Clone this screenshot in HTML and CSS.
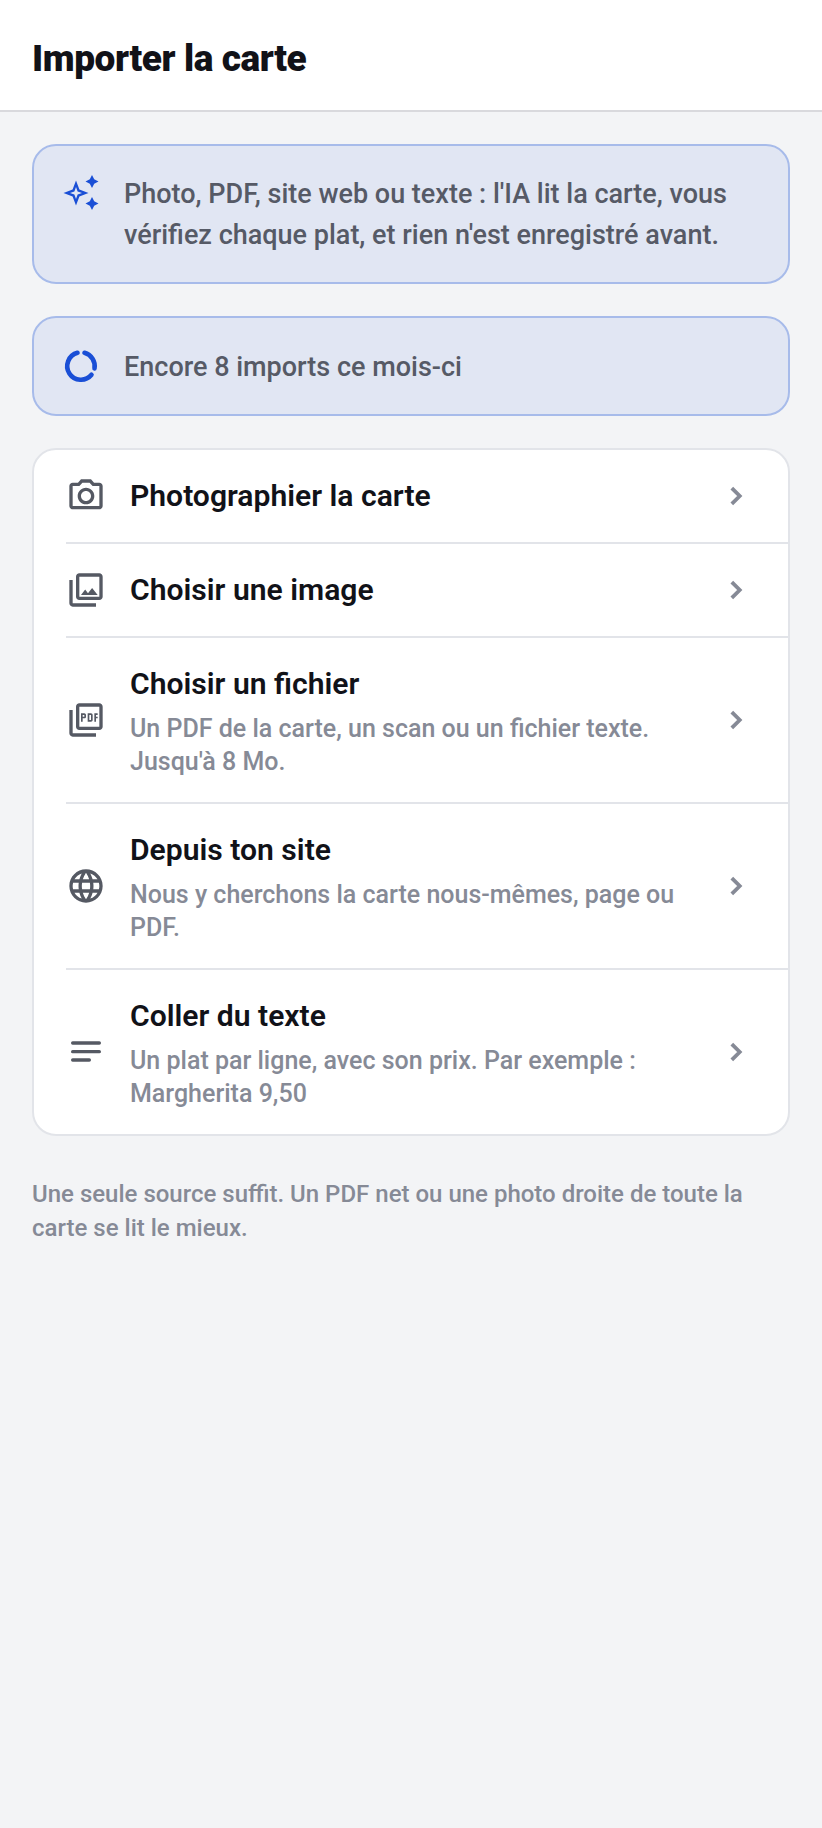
FILE: index.html
```html
<!DOCTYPE html>
<html lang="fr">
<head>
<meta charset="utf-8">
<title>Importer la carte</title>
<link rel="stylesheet" href="styles.css">
</head>
<body>
<header class="header"><h1 class="title">Importer la carte</h1></header>
<main class="content">
  <section class="banner">
    <svg class="banner-icon" viewBox="0 0 36 36"><path fill-rule="evenodd" d="M13 5.5 16.4 14.6 25.5 18 16.4 21.4 13 30.5 9.6 21.4 .5 18 9.6 14.6ZM13 12 11.4 16.4 7 18 11.4 19.6 13 24 14.6 19.6 19 18 14.6 16.4Z"/><path d="M29 0 31.2 4.3 35.5 6.5 31.2 8.7 29 13 26.8 8.7 22.5 6.5 26.8 4.3ZM29 22 31.2 26.3 35.5 28.5 31.2 30.7 29 35 26.8 30.7 22.5 28.5 26.8 26.3Z"/></svg>
    <p class="banner-text">Photo, PDF, site web ou texte : l'IA lit la carte, vous vérifiez chaque plat, et rien n'est enregistré avant.</p>
  </section>
  <section class="banner banner-center">
    <svg class="banner-icon" viewBox="0 0 36 36"><g class="ring"><path d="M21.5 4.8A13.7 13.7 0 0 1 31.5 20.4"/><path d="M28.5 26.8A13.7 13.7 0 1 1 14.5 4.8"/></g></svg>
    <p class="banner-text">Encore 8 imports ce mois-ci</p>
  </section>
  <section class="list">
    <div class="row">
      <svg class="row-icon" viewBox="0 0 24 24"><path d="M20 4h-3.17L15 2H9L7.17 4H4c-1.1 0-2 .9-2 2v12c0 1.1.9 2 2 2h16c1.1 0 2-.9 2-2V6c0-1.1-.9-2-2-2zm0 14H4V6h4.05l1.83-2h4.24l1.83 2H20v12zM12 7c-2.76 0-5 2.24-5 5s2.24 5 5 5 5-2.24 5-5-2.24-5-5-5zm0 8c-1.65 0-3-1.35-3-3s1.35-3 3-3 3 1.35 3 3-1.35 3-3 3z"/></svg>
      <div class="row-body"><div class="row-title">Photographier la carte</div></div>
      <svg class="chevron" viewBox="0 0 24 24"><path d="M9.2 6.7 14.5 12 9.2 17.3"/></svg>
    </div>
    <div class="row">
      <svg class="row-icon" viewBox="0 0 24 24"><path d="M20 4v12H8V4h12m0-2H8c-1.1 0-2 .9-2 2v12c0 1.1.9 2 2 2h12c1.1 0 2-.9 2-2V4c0-1.1-.9-2-2-2zm-8.5 9.67l1.69 2.26 2.48-3.1L19 15H9zM2 6v14c0 1.1.9 2 2 2h14v-2H4V6H2z"/></svg>
      <div class="row-body"><div class="row-title">Choisir une image</div></div>
      <svg class="chevron" viewBox="0 0 24 24"><path d="M9.2 6.7 14.5 12 9.2 17.3"/></svg>
    </div>
    <div class="row">
      <svg class="row-icon" viewBox="0 0 24 24"><path d="M20 2H8c-1.1 0-2 .9-2 2v12c0 1.1.9 2 2 2h12c1.1 0 2-.9 2-2V4c0-1.1-.9-2-2-2zm0 14H8V4h12v12zM4 6H2v14c0 1.1.9 2 2 2h14v-2H4V6zm12 6V9c0-.55-.45-1-1-1h-2v5h2c.55 0 1-.45 1-1zm-2-3h1v3h-1V9zm4 2h1v-1h-1V9h1V8h-2v5h1v-2zm-8 0h1c.55 0 1-.45 1-1V9c0-.55-.45-1-1-1H9v5h1v-2zm0-2h1v1h-1V9z"/></svg>
      <div class="row-body"><div class="row-title">Choisir un fichier</div><div class="row-sub">Un PDF de la carte, un scan ou un fichier texte. Jusqu'à 8 Mo.</div></div>
      <svg class="chevron" viewBox="0 0 24 24"><path d="M9.2 6.7 14.5 12 9.2 17.3"/></svg>
    </div>
    <div class="row">
      <svg class="row-icon" viewBox="0 0 24 24"><path d="M11.99 2C6.47 2 2 6.48 2 12s4.47 10 9.99 10C17.52 22 22 17.52 22 12S17.52 2 11.99 2zm6.93 6h-2.95c-.32-1.25-.78-2.45-1.38-3.56 1.84.63 3.37 1.91 4.33 3.56zM12 4.04c.83 1.2 1.48 2.53 1.91 3.96h-3.82c.43-1.43 1.08-2.76 1.91-3.96zM4.26 14C4.1 13.36 4 12.69 4 12s.1-1.36.26-2h3.38c-.08.66-.14 1.32-.14 2 0 .68.06 1.34.14 2H4.26zm.82 2h2.95c.32 1.25.78 2.45 1.38 3.56-1.84-.63-3.37-1.9-4.33-3.56zm2.95-8H5.08c.96-1.66 2.49-2.93 4.33-3.56C8.81 5.55 8.35 6.75 8.03 8zM12 19.96c-.83-1.2-1.48-2.53-1.91-3.96h3.82c-.43 1.43-1.08 2.76-1.91 3.96zM14.34 14H9.66c-.09-.66-.16-1.32-.16-2 0-.68.07-1.35.16-2h4.68c.09.65.16 1.32.16 2 0 .68-.07 1.34-.16 2zm.25 5.56c.6-1.11 1.06-2.31 1.38-3.56h2.95c-.96 1.65-2.49 2.93-4.33 3.56zM16.36 14c.08-.66.14-1.32.14-2 0-.68-.06-1.34-.14-2h3.38c.16.64.26 1.31.26 2s-.1 1.36-.26 2h-3.38z"/></svg>
      <div class="row-body"><div class="row-title">Depuis ton site</div><div class="row-sub">Nous y cherchons la carte nous-mêmes, page ou PDF.</div></div>
      <svg class="chevron" viewBox="0 0 24 24"><path d="M9.2 6.7 14.5 12 9.2 17.3"/></svg>
    </div>
    <div class="row">
      <svg class="row-icon" viewBox="0 0 24 24"><g class="lines"><path d="M4 6.6h16"/><path d="M4 11.8h16"/><path d="M4 16.8h10"/></g></svg>
      <div class="row-body"><div class="row-title">Coller du texte</div><div class="row-sub">Un plat par ligne, avec son prix. Par exemple : Margherita 9,50</div></div>
      <svg class="chevron" viewBox="0 0 24 24"><path d="M9.2 6.7 14.5 12 9.2 17.3"/></svg>
    </div>
  </section>
  <p class="note">Une seule source suffit. Un PDF net ou une photo droite de toute la carte se lit le mieux.</p>
</main>
</body>
</html>
```
FILE: styles.css
```css
* { box-sizing: border-box; }
html, body { margin: 0; padding: 0; }
body { min-height: 1828px; background: #f3f4f6; font-family: Roboto, "Liberation Sans", sans-serif; }
.header { height: 112px; background: #fff; border-bottom: 2px solid #d9d9dd; padding: 6px 32px 0; display: flex; align-items: center; }
.title { margin: 0; font-size: 37px; font-weight: 900; letter-spacing: -0.42px; color: #111218; }
.content { padding: 32px; display: flex; flex-direction: column; gap: 32px; }
.banner { display: flex; align-items: flex-start; gap: 25px; padding: 27px 29px; background: #e1e6f3; border: 2px solid #a7bbea; border-radius: 24px; }
.banner-center { align-items: center; padding: 27.5px 29px; }
.banner-icon { width: 36px; height: 36px; flex: none; fill: #1a4fd6; margin-top: 2px; }
.banner-center .banner-icon { margin-top: 0; }
.ring { fill: none; stroke: #1a4fd6; stroke-width: 4.6; stroke-linecap: round; }
.banner-text { margin: 1px 0 -1px; font-size: 27px; line-height: 41px; font-weight: 500; color: #565a66; }
.list { background: #fff; border: 2px solid #e2e4e9; border-radius: 24px; overflow: hidden; }
.row { display: flex; align-items: center; margin-left: 32px; padding: 24px 34px 24px 0; gap: 24px; border-top: 2px solid #e2e4e9; }
.row:first-child { border-top: 0; }
.row-icon { width: 40px; height: 40px; flex: none; fill: #555963; }
.lines { fill: none; stroke: #555963; stroke-width: 2; stroke-linecap: round; }
.row-body { flex: 1; min-width: 0; }
.row-title { font-size: 30.1px; line-height: 44px; font-weight: 600; color: #111218; }
.row-sub { margin-top: 6px; font-size: 25px; line-height: 33px; font-weight: 500; color: #868a96; }
.chevron { width: 36px; height: 36px; flex: none; fill: none; stroke: #868a96; stroke-width: 2.5; }
.note { margin: 9px 0 0; font-size: 24px; line-height: 34px; font-weight: 500; color: #868a96; }
```
